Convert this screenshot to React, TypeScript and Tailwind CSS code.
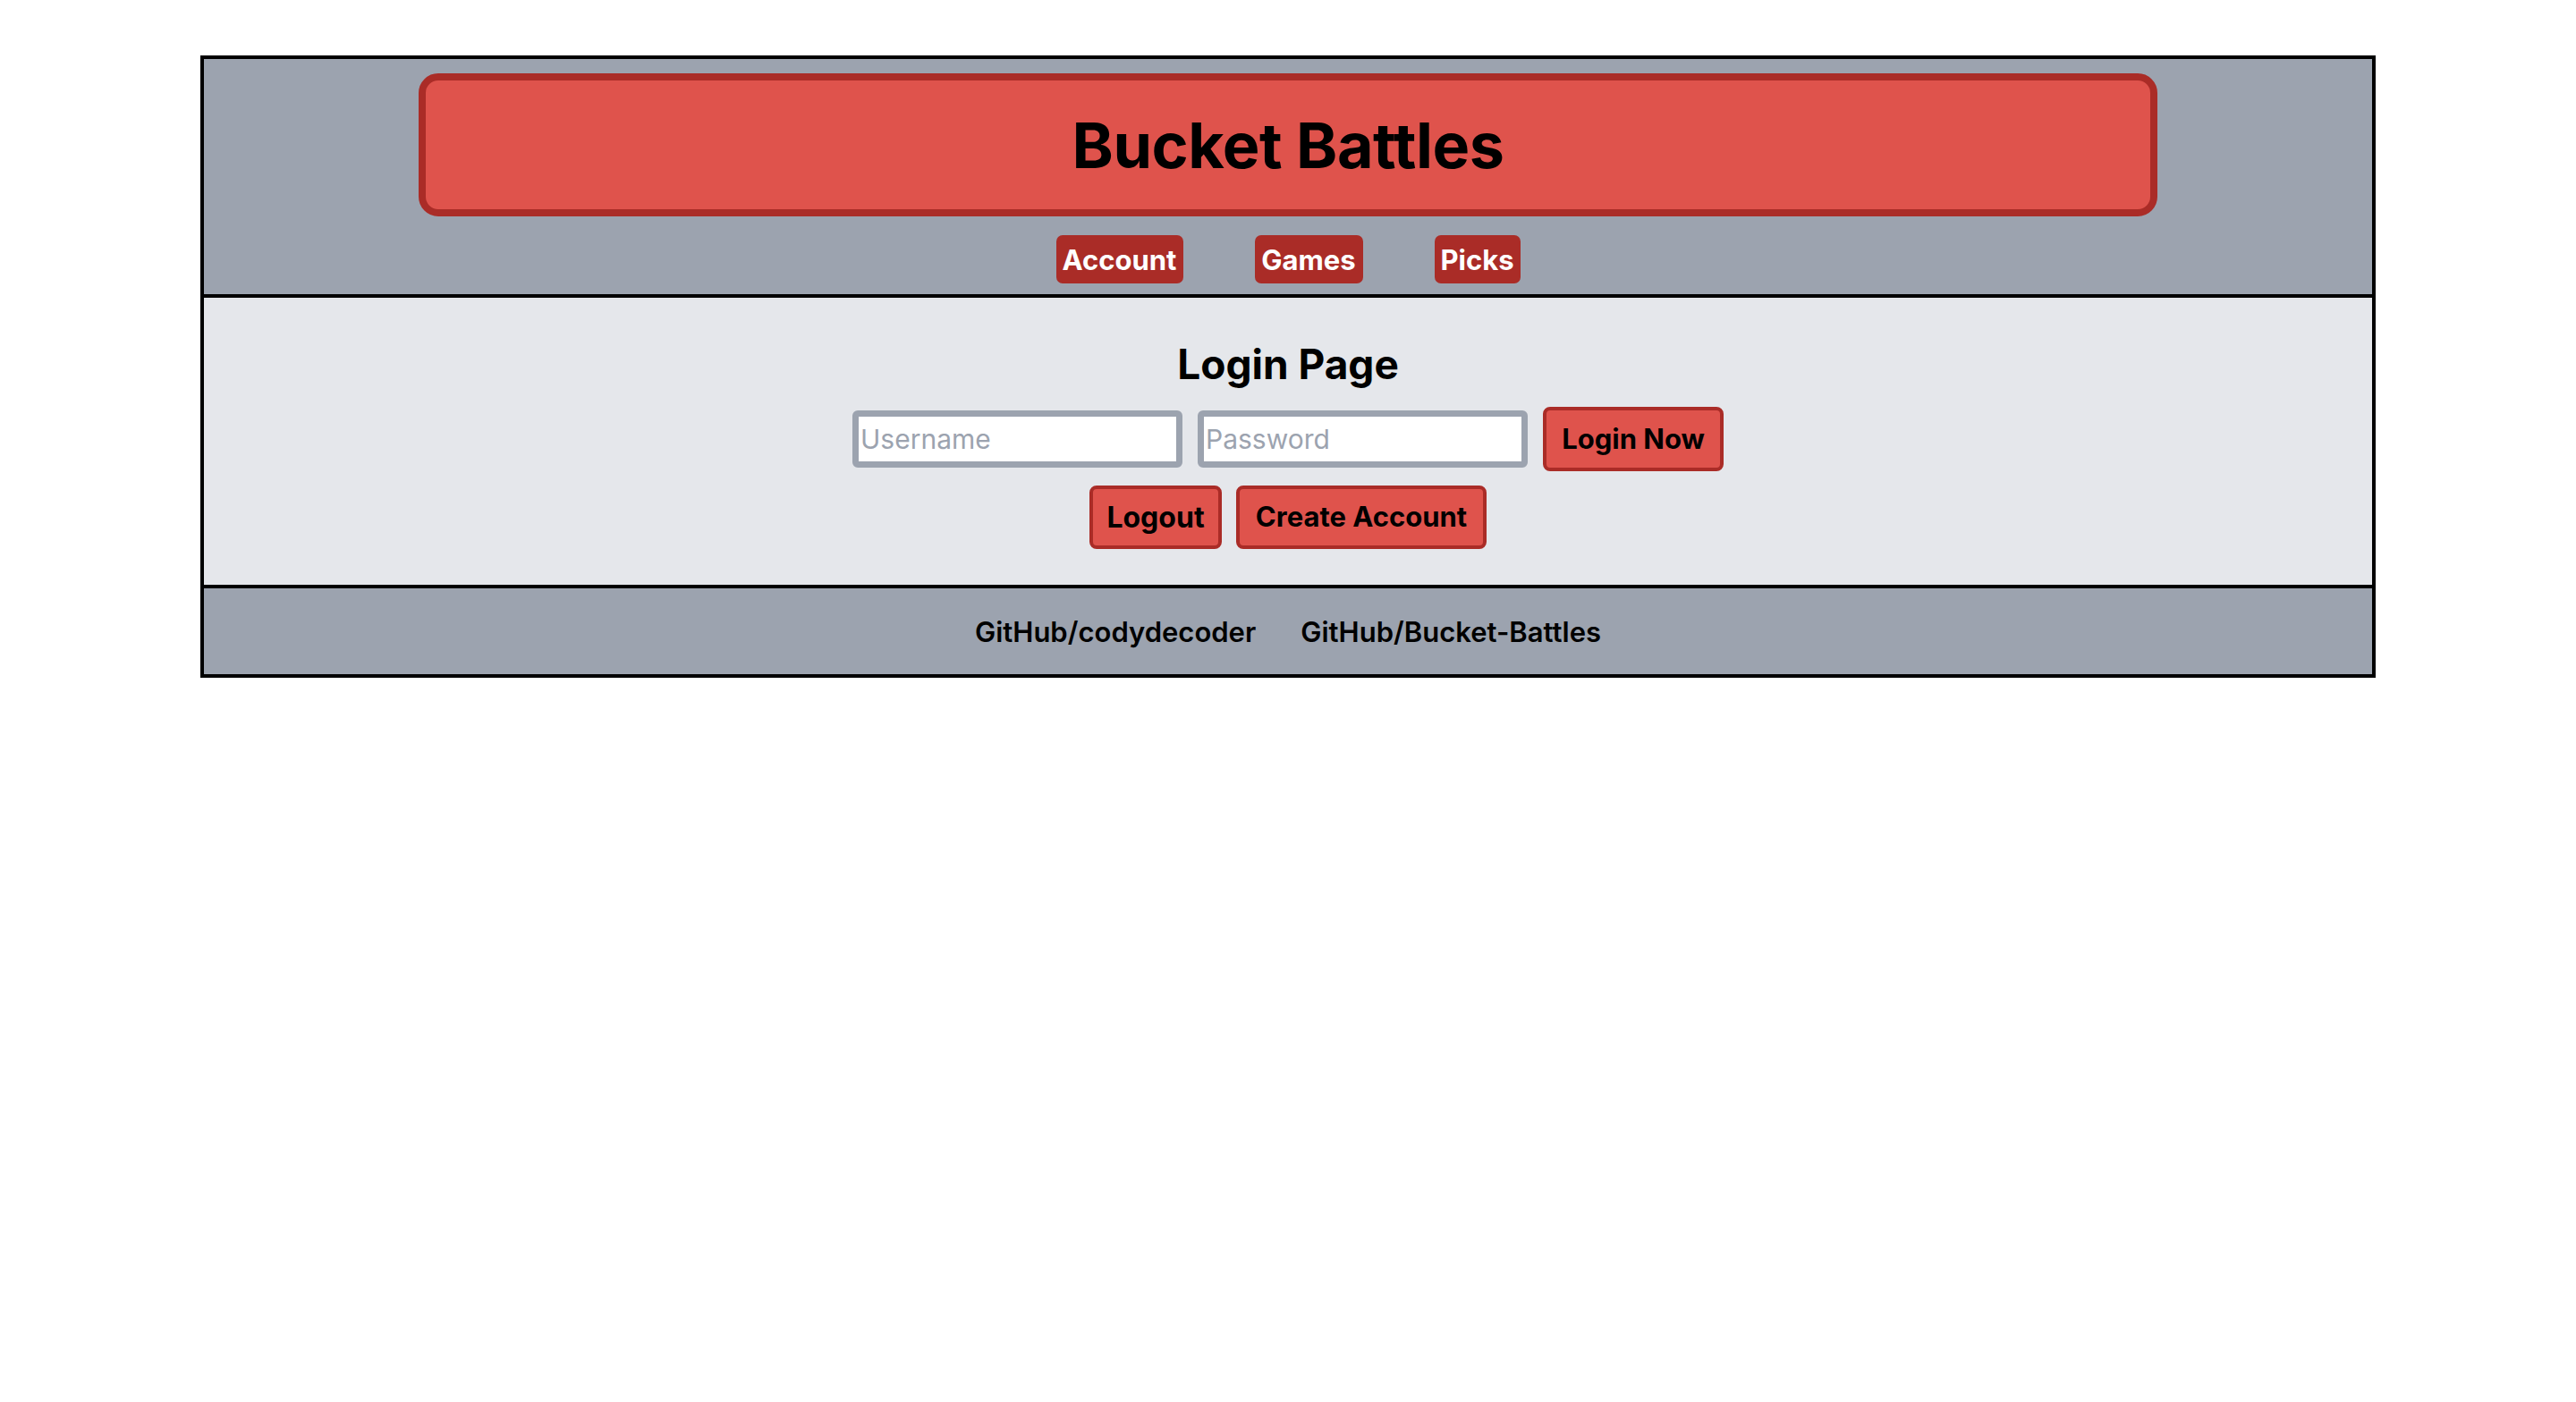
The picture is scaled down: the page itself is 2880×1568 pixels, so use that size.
import React from 'react'

const navItems = [
  { label: 'Account', w: 'w-[142px]' },
  { label: 'Games', w: 'w-[121px]' },
  { label: 'Picks', w: 'w-[96px]' },
]

export default function App() {
  return (
    <div className="min-h-screen bg-white pt-[62px] font-['Inter','Liberation_Sans',sans-serif] text-black">
      <div className="mx-auto w-[2432px] border-4 border-black">
        {/* header */}
        <header className="flex flex-col items-center border-b-4 border-black bg-[#9ca3af] pt-4 pb-3">
          <div className="flex h-[160px] w-[1944px] items-center justify-center rounded-[22px] border-8 border-[#aa2c27] bg-[#df534c]">
            <h1 className="pt-[2px] text-[70px] leading-none font-bold tracking-[-0.5px]">Bucket Battles</h1>
          </div>
          <nav className="mt-[21px] flex gap-[80px]">
            {navItems.map((item) => (
              <button
                key={item.label}
                className={`flex h-[54px] ${item.w} items-center justify-center rounded-[7px] bg-[#aa2c27] text-[31px] leading-none font-bold text-white`}
              >
                {item.label}
              </button>
            ))}
          </nav>
        </header>

        {/* login */}
        <main className="flex flex-col items-center border-b-4 border-black bg-[#e5e7eb] pt-[42px] pb-[40px]">
          <h2 className="h-[64px] text-[46px] leading-[64px] font-bold">Login Page</h2>
          <div className="mt-[16px] flex h-[72px] items-center gap-[17px]">
            <input
              type="text"
              placeholder="Username"
              className="h-[64px] w-[369px] rounded-[6px] border-[7px] border-[#9ca3af] bg-white pl-[2px] text-[30px] outline-none placeholder:text-[#9ca3af]"
            />
            <input
              type="password"
              placeholder="Password"
              className="h-[64px] w-[369px] rounded-[6px] border-[7px] border-[#9ca3af] bg-white pl-[2px] text-[30px] outline-none placeholder:text-[#9ca3af]"
            />
            <button className="h-[72px] w-[202px] rounded-[8px] border-4 border-[#aa2c27] bg-[#df534c] text-[31px] font-bold">
              Login Now
            </button>
          </div>
          <div className="mt-4 flex gap-4">
            <button className="h-[71px] w-[148px] rounded-[8px] border-4 border-[#aa2c27] bg-[#df534c] text-[32px] font-bold">
              Logout
            </button>
            <button className="h-[71px] w-[280px] rounded-[8px] border-4 border-[#aa2c27] bg-[#df534c] text-[31px] font-bold">
              Create Account
            </button>
          </div>
        </main>

        {/* footer */}
        <footer className="flex h-[96px] items-center justify-center gap-[50px] bg-[#9ca3af]">
          <a className="text-[31px] leading-[45px] font-semibold">GitHub/codydecoder</a>
          <a className="text-[31px] leading-[45px] font-semibold">GitHub/Bucket-Battles</a>
        </footer>
      </div>
    </div>
  )
}
